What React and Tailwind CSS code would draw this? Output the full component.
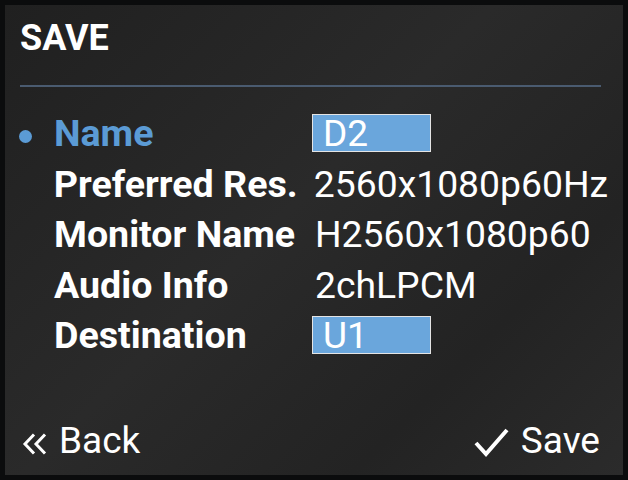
export default function App() {
  const rows = [
    { label: "Name", value: "D2", active: true, box: true },
    { label: "Preferred Res.", value: "2560x1080p60Hz" },
    { label: "Monitor Name", value: "H2560x1080p60" },
    { label: "Audio Info", value: "2chLPCM" },
    { label: "Destination", value: "U1", box: true },
  ];
  return (
    <div className="w-[628px] h-[480px] bg-[#0b0c0d] p-[5px] font-['Roboto',sans-serif] text-white">
      <div className="w-full h-full flex flex-col bg-[linear-gradient(135deg,#202020_0%,#2a2a2a_45%,#232323_75%,#2b2b2b_100%)] px-[15px]">
        <div className="pt-[12px] text-[36px] leading-[42px] font-bold">SAVE</div>
        <div className="mt-[26px] h-[2px] bg-[#4a5b70] mr-[7px]" />
        <div className="mt-[21px] flex flex-col">
          {rows.map((r) => (
            <div key={r.label} className="h-[50.5px] flex items-center">
              <div className="w-[34px] flex items-center">
                {r.active && <div className="ml-[-1px] mt-[6px] w-[13px] h-[13px] rounded-full bg-[#5b9bd5]" />}
              </div>
              <div className={`w-[258px] text-[37.6px] leading-[44px] font-bold ${r.active ? "text-[#5b9bd5]" : "text-white"}`}>{r.label}</div>
              {r.box ? (
                <div className="w-[119px] h-[38px] border border-[#e4e4e4] bg-[#6aa6dc] pl-[10px] text-[37px] leading-[38px]">{r.value}</div>
              ) : (
                <div className="pl-[3px] text-[37.3px] leading-[44px]">{r.value}</div>
              )}
            </div>
          ))}
        </div>
        <div className="flex-1" />
        <div className="pb-[12px] flex items-center justify-between mr-[8px] text-[37px] leading-[44px]">
          <div className="flex items-center gap-[10px]">
            <svg width="28" height="22" viewBox="0 0 28 22" className="ml-[1px] mt-[5px]">
              <path d="M13 1.5 L4 11 L13 20.5" stroke="white" strokeWidth="3" fill="none" strokeLinejoin="miter" />
              <path d="M24 1.5 L15 11 L24 20.5" stroke="white" strokeWidth="3" fill="none" strokeLinejoin="miter" />
            </svg>
            <span>Back</span>
          </div>
          <div className="flex items-center gap-[12px]">
            <svg width="35" height="30" viewBox="0 0 35 30" className="mt-[2px]">
              <path d="M2 16 L12 27 L33 3" stroke="white" strokeWidth="4" fill="none" />
            </svg>
            <span>Save</span>
          </div>
        </div>
      </div>
    </div>
  );
}
